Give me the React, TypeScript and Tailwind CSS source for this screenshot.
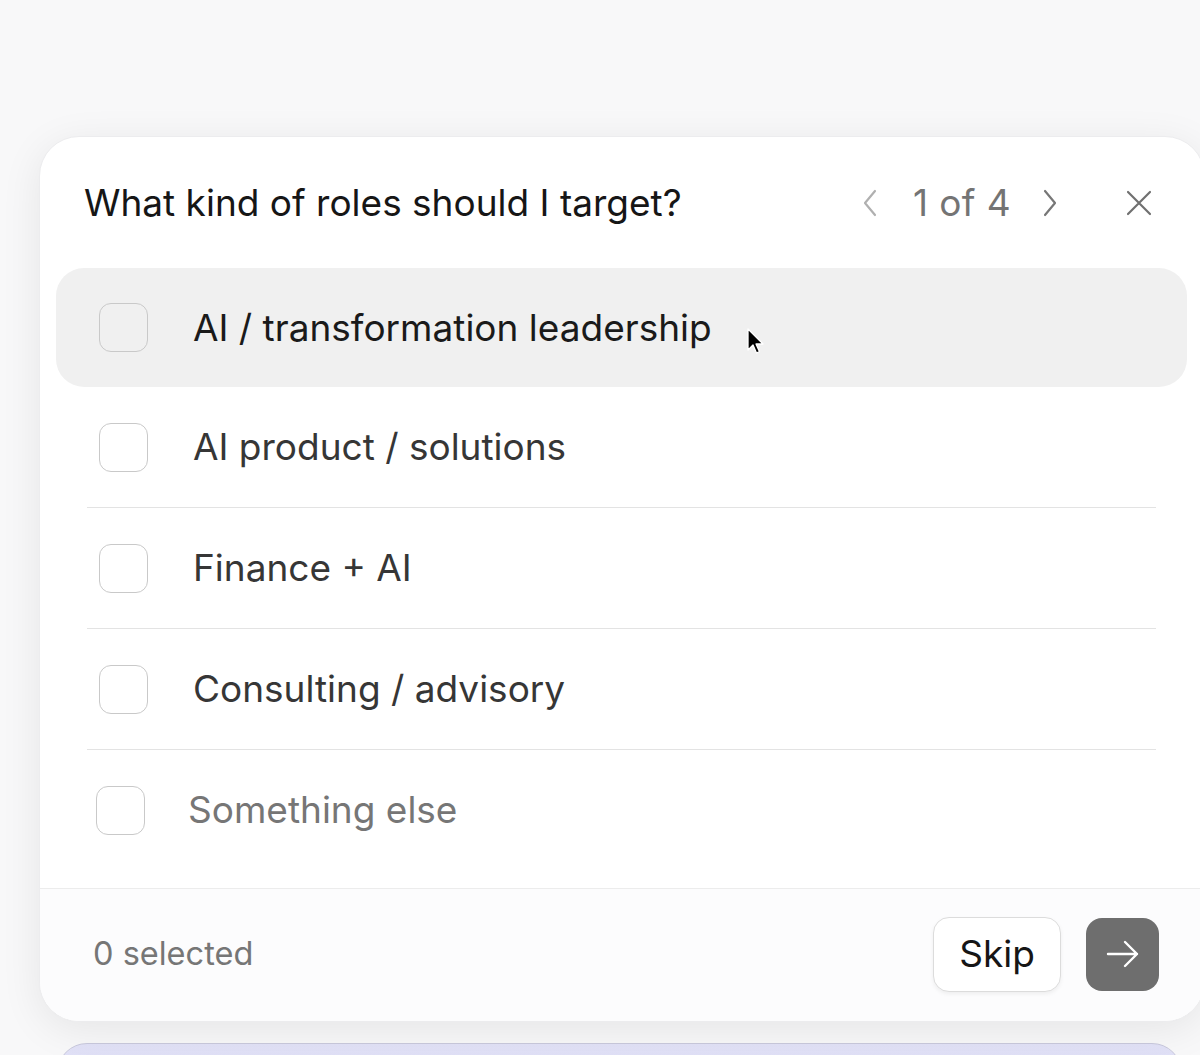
import React from "react";

const options = [
  { label: "AI / transformation leadership", active: true },
  { label: "AI product / solutions" },
  { label: "Finance + AI" },
  { label: "Consulting / advisory" },
];

function Checkbox({ className = "" }: { className?: string }) {
  return (
    <div
      className={
        "w-[49px] h-[49px] shrink-0 rounded-[12px] border-[1.5px] border-[#c9c9c9] " +
        className
      }
    />
  );
}

export default function App() {
  return (
    <div
      className="relative h-[1055px] w-[1200px] overflow-hidden bg-[#f8f8f9]"
      style={{ fontFamily: "Inter, 'Liberation Sans', sans-serif" }}
    >
      <div className="pt-[136px] pl-[39px]">
        <div className="relative w-[1166px] h-[886px] rounded-[40px] bg-white shadow-[0_8px_40px_rgba(0,0,0,0.08)] border border-[#ececee] flex flex-col overflow-hidden">
          {/* header */}
          <div className="h-[131px] flex items-center pl-[44px] pr-[52px]">
            <div className="text-[37px] font-[410] text-[#161616]">
              What kind of roles should I target?
            </div>
            <div className="ml-auto flex items-center">
              <svg width="20" height="30" viewBox="0 0 20 30" className="mr-[33px]">
                <path d="M15 3 L5 15 L15 27" fill="none" stroke="#b0b0b0" strokeWidth="2.2" strokeLinecap="round" strokeLinejoin="round" />
              </svg>
              <span className="text-[37px] font-[410] tracking-[0.4px] text-[#747474]">1 of 4</span>
              <svg width="20" height="30" viewBox="0 0 20 30" className="ml-[29px]">
                <path d="M5 3 L15 15 L5 27" fill="none" stroke="#777777" strokeWidth="2.2" strokeLinecap="round" strokeLinejoin="round" />
              </svg>
              <svg width="26" height="26" viewBox="0 0 26 26" className="ml-[66px]">
                <path d="M2 2 L24 24 M24 2 L2 24" fill="none" stroke="#707070" strokeWidth="2.2" strokeLinecap="round" />
              </svg>
            </div>
          </div>

          {/* options */}
          <div className="pl-[16px] pr-[17px]">
            {options.map((o, i) => (
              <div key={o.label}>
                {i > 1 && <div className="mx-[31px] h-px bg-[#e3e3e3]" />}
                <div
                  className={
                    o.active
                      ? "h-[119px] flex items-center pl-[43px] rounded-[28px] bg-[#f0f0f0]"
                      : "h-[120px] flex items-center pl-[43px]"
                  }
                >
                  <Checkbox className={o.active ? "" : "bg-white"} />
                  <span
                    className={
                      "ml-[45px] text-[37px] font-[410] " +
                      (o.active ? "text-[#1a1a1a]" : "text-[#363636]")
                    }
                  >
                    {o.label}
                  </span>
                </div>
              </div>
            ))}
            <div className="mx-[31px] h-px bg-[#e3e3e3]" />
            <div className="h-[120px] flex items-center pl-[40px]">
              <Checkbox className="w-[48px] h-[48px] bg-white" />
              <span className="ml-[43px] text-[37px] font-[410] text-[#767676]">Something else</span>
            </div>
          </div>

          {/* footer */}
          <div className="mt-[18px] flex-1 border-t border-[#ececec] bg-[#fcfcfd] flex items-center pl-[53px] pr-[45px] pb-[2px]">
            <span className="text-[32.5px] font-[410] text-[#767676]">0 selected</span>
            <div className="ml-auto flex items-center gap-[25px]">
              <button className="w-[128px] h-[75px] rounded-[16px] border border-[#dcdcdc] bg-white shadow-[0_2px_4px_rgba(0,0,0,0.06)] text-[37px] font-[410] text-[#161616] flex items-center justify-center">
                Skip
              </button>
              <button className="w-[73px] h-[73px] rounded-[16px] bg-[#6e6e6e] flex items-center justify-center">
                <svg width="36" height="30" viewBox="0 0 36 30">
                  <path d="M3 15 H32 M20 3 L32 15 L20 27" fill="none" stroke="white" strokeWidth="2.4" strokeLinecap="round" strokeLinejoin="round" />
                </svg>
              </button>
            </div>
          </div>
        </div>

        {/* next card peeking */}
        <div className="mt-[21px] ml-[18px] w-[1125px] h-[60px] rounded-t-[30px] border border-[#c9c9dd] bg-gradient-to-b from-[#e2e2f7] to-[#d8d8f5]" />
      </div>

      {/* mouse cursor */}
      <svg className="absolute left-[746px] top-[328px]" width="20" height="28" viewBox="0 0 20 28">
        <path d="M2 1 L2 22 L7 17 L10.5 25 L13.5 23.7 L10 16 L17 16 Z" fill="black" stroke="white" strokeWidth="1.3" strokeLinejoin="round" />
      </svg>
    </div>
  );
}
